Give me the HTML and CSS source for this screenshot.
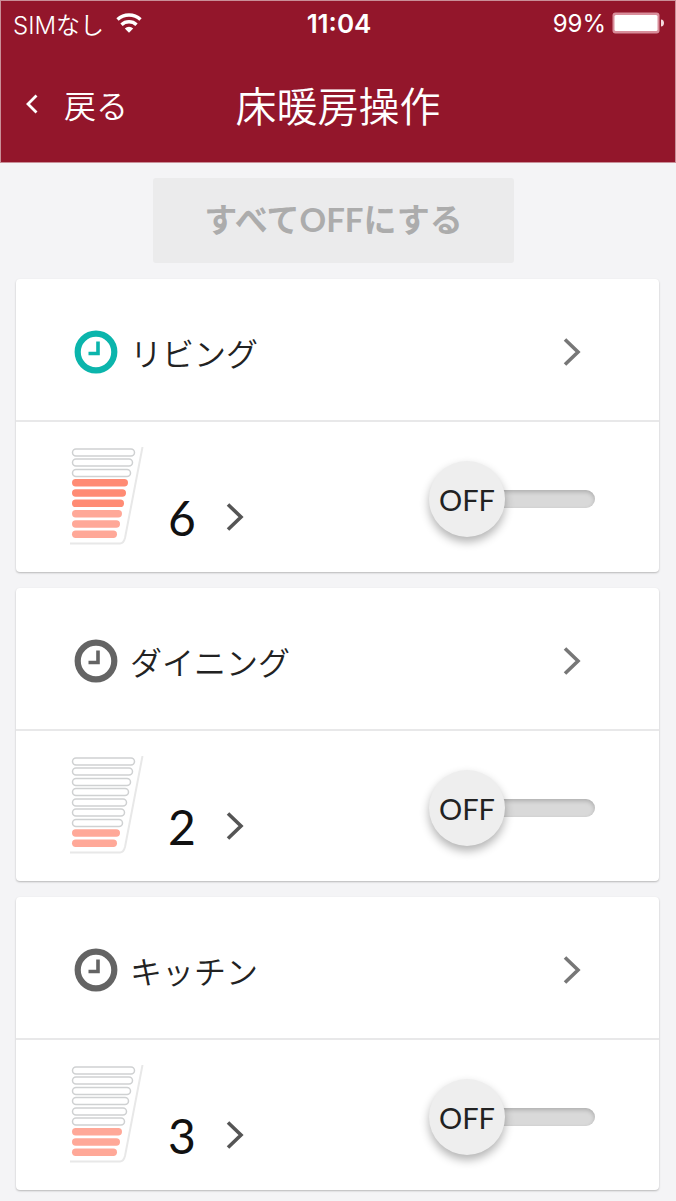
FILE: index.html
```
<!DOCTYPE html>
<html lang="ja">
<head>
    <meta charset="UTF-8">
    <meta name="viewport" content="width=device-width, initial-scale=1.0">
    <title>床暖房操作</title>
    <link rel="stylesheet" href="styles.css">
</head>
<body>
    <header class="header">
        <!-- ステータスバー -->
        <div class="status">
            <div class="carrier">
                <span>SIMなし</span>
                <svg width="26" height="20" viewBox="0 0 26 20" aria-hidden="true">
                    <path d="M1.5 6.5a17 17 0 0 1 23 0" fill="none" stroke="currentColor" stroke-width="3.4"/>
                    <path d="M5.5 11.7a11 11 0 0 1 15 0" fill="none" stroke="currentColor" stroke-width="3.4"/>
                    <path d="M13 19.8l-4.2-4.3a6 6 0 0 1 8.4 0z" fill="currentColor"/>
                </svg>
            </div>
            <span class="time">11:04</span>
            <div class="power">
                <span>99%</span>
                <svg width="53" height="22" viewBox="0 0 53 22" aria-hidden="true">
                    <rect x="0.5" y="0.5" width="47" height="21" rx="3" fill="#d98e9b"/>
                    <rect x="2.5" y="3" width="43" height="16" rx="1.5" fill="#fff"/>
                    <path d="M49 7.5c4 0 4 7 0 7z" fill="#f3d9dd"/>
                </svg>
            </div>
        </div>
        <div class="nav">
            <a class="back" href="#">
                <svg width="12" height="20" viewBox="0 0 12 20" aria-hidden="true">
                    <path d="M10.5 1.5L2 10l8.5 8.5" fill="none" stroke="currentColor" stroke-width="2.8"/>
                </svg>
                戻る
            </a>
            <h1 class="title">床暖房操作</h1>
        </div>
    </header>

    <main class="main">
        <button class="all-off" type="button" disabled>すべてOFFにする</button>

        <!-- リビング -->
        <section class="card">
            <a class="room" href="#">
                <svg class="clock clock-on" width="44" height="44" viewBox="0 0 44 44" aria-hidden="true">
                    <circle cx="22" cy="22" r="18.3" fill="none" stroke="currentColor" stroke-width="6.2"/>
                    <path d="M24 11.5v12H14.500" fill="none" stroke="currentColor" stroke-width="3.6"/>
                </svg>
                <span>リビング</span>
                <svg class="arrow" width="18" height="28" viewBox="0 0 18 28" aria-hidden="true">
                    <path d="M2 1.5L15 14 2 26.5" fill="none" stroke="currentColor" stroke-width="3.6"/>
                </svg>
            </a>
            <div class="control">
                <svg class="gauge" width="74" height="100" viewBox="0 0 74 100" aria-hidden="true">
                    <path class="frame" d="M72.5 0L55 91q-1.5 5.5-5 5.5H0"/>
                    <rect class="empty" x="2.5" y="2" width="62" height="7" rx="3.5"/>
                    <rect class="empty" x="2.5" y="12" width="60" height="7" rx="3.5"/>
                    <rect class="empty" x="2.5" y="22.5" width="58" height="7" rx="3.5"/>
                    <rect class="high" x="2" y="32" width="56" height="7.5" rx="3.7"/>
                    <rect class="high" x="2" y="42.3" width="54" height="7.5" rx="3.7"/>
                    <rect class="high" x="2" y="52.6" width="52" height="7.5" rx="3.7"/>
                    <rect class="low" x="2" y="63" width="50" height="7.5" rx="3.7"/>
                    <rect class="low" x="2" y="73.2" width="48" height="7.5" rx="3.7"/>
                    <rect class="low" x="2" y="83.5" width="45" height="7.5" rx="3.7"/>
                </svg>
                <button class="level" type="button">
                    6
                    <svg width="18" height="28" viewBox="0 0 18 28" aria-hidden="true">
                        <path d="M2 1.5L15 14 2 26.5" fill="none" stroke="currentColor" stroke-width="3.6"/>
                    </svg>
                </button>
                <label class="toggle">
                    <span class="knob">OFF</span>
                    <input class="track" type="checkbox" name="living">
                </label>
            </div>
        </section>

        <!-- ダイニング -->
        <section class="card">
            <a class="room" href="#">
                <svg class="clock" width="44" height="44" viewBox="0 0 44 44" aria-hidden="true">
                    <circle cx="22" cy="22" r="18.3" fill="none" stroke="currentColor" stroke-width="6.2"/>
                    <path d="M24 11.5v12H14.5" fill="none" stroke="currentColor" stroke-width="3.6"/>
                </svg>
                <span>ダイニング</span>
                <svg class="arrow" width="18" height="28" viewBox="0 0 18 28" aria-hidden="true">
                    <path d="M2 1.5L15 14 2 26.5" fill="none" stroke="currentColor" stroke-width="3.6"/>
                </svg>
            </a>
            <div class="control">
                <svg class="gauge" width="74" height="100" viewBox="0 0 74 100" aria-hidden="true">
                    <path class="frame" d="M72.5 0L55 91q-1.5 5.5-5 5.5H0"/>
                    <rect class="empty" x="2.5" y="2" width="62" height="7" rx="3.5"/>
                    <rect class="empty" x="2.5" y="12" width="60" height="7" rx="3.5"/>
                    <rect class="empty" x="2.5" y="22.5" width="58" height="7" rx="3.5"/>
                    <rect class="empty" x="2.5" y="32.5" width="56" height="7" rx="3.5"/>
                    <rect class="empty" x="2.5" y="43" width="54" height="7" rx="3.5"/>
                    <rect class="empty" x="2.5" y="53" width="52" height="7" rx="3.5"/>
                    <rect class="empty" x="2.5" y="63.5" width="50" height="7" rx="3.5"/>
                    <rect class="low" x="2" y="73.2" width="48" height="7.5" rx="3.7"/>
                    <rect class="low" x="2" y="83.5" width="45" height="7.5" rx="3.7"/>
                </svg>
                <button class="level" type="button">
                    2
                    <svg width="18" height="28" viewBox="0 0 18 28" aria-hidden="true">
                        <path d="M2 1.5L15 14 2 26.5" fill="none" stroke="currentColor" stroke-width="3.6"/>
                    </svg>
                </button>
                <label class="toggle">
                    <span class="knob">OFF</span>
                    <input class="track" type="checkbox" name="dining">
                </label>
            </div>
        </section>

        <!-- キッチン -->
        <section class="card">
            <a class="room" href="#">
                <svg class="clock" width="44" height="44" viewBox="0 0 44 44" aria-hidden="true">
                    <circle cx="22" cy="22" r="18.3" fill="none" stroke="currentColor" stroke-width="6.2"/>
                    <path d="M24 11.5v12H14.5" fill="none" stroke="currentColor" stroke-width="3.6"/>
                </svg>
                <span>キッチン</span>
                <svg class="arrow" width="18" height="28" viewBox="0 0 18 28" aria-hidden="true">
                    <path d="M2 1.5L15 14 2 26.5" fill="none" stroke="currentColor" stroke-width="3.6"/>
                </svg>
            </a>
            <div class="control">
                <svg class="gauge" width="74" height="100" viewBox="0 0 74 100" aria-hidden="true">
                    <path class="frame" d="M72.5 0L55 91q-1.5 5.5-5 5.5H0"/>
                    <rect class="empty" x="2.5" y="2" width="62" height="7" rx="3.5"/>
                    <rect class="empty" x="2.5" y="12" width="60" height="7" rx="3.5"/>
                    <rect class="empty" x="2.5" y="22.5" width="58" height="7" rx="3.5"/>
                    <rect class="empty" x="2.5" y="32.5" width="56" height="7" rx="3.5"/>
                    <rect class="empty" x="2.5" y="43" width="54" height="7" rx="3.5"/>
                    <rect class="empty" x="2.5" y="53" width="52" height="7" rx="3.5"/>
                    <rect class="low" x="2" y="63" width="50" height="7.5" rx="3.7"/>
                    <rect class="low" x="2" y="73.2" width="48" height="7.5" rx="3.7"/>
                    <rect class="low" x="2" y="83.5" width="45" height="7.5" rx="3.7"/>
                </svg>
                <button class="level" type="button">
                    3
                    <svg width="18" height="28" viewBox="0 0 18 28" aria-hidden="true">
                        <path d="M2 1.5L15 14 2 26.5" fill="none" stroke="currentColor" stroke-width="3.6"/>
                    </svg>
                </button>
                <label class="toggle">
                    <span class="knob">OFF</span>
                    <input class="track" type="checkbox" name="kitchen">
                </label>
            </div>
        </section>
    </main>
</body>
</html>
```
FILE: styles.css
```
* {
    box-sizing: border-box;
}
body {
    margin: 0;
    font-family: Lato, "Noto Sans CJK JP", sans-serif;
    background-color: #f4f4f6;
    color: #222;
}
.header {
    background-color: #93162b;
    border: 1px solid #c98f98;
    color: #fff;
}
.status {
    display: grid;
    grid-template-columns: 1fr auto 1fr;
    align-items: center;
    height: 44px;
    padding: 0 10px 0 12px;
    font-family: Inter, "Noto Sans CJK JP", sans-serif;
    font-size: 24px;
}
.carrier,
.power {
    display: flex;
    align-items: center;
}
.carrier {
    gap: 12px;
    font-weight: 350;
}
.power {
    justify-content: flex-end;
    gap: 6px;
}
.time {
    font-size: 26px;
    font-weight: 600;
}
.nav {
    display: grid;
    grid-template-columns: 1fr auto 1fr;
    align-items: center;
    height: 117px;
    padding: 0 25px;
    font-family: "Noto Sans CJK JP", sans-serif;
    font-weight: 350;
}
.back {
    display: flex;
    align-items: center;
    gap: 26px;
    color: #fff;
    font-size: 32px;
    text-decoration: none;
}
.title {
    margin: 0;
    font-size: 41px;
    font-weight: 350;
}
.main {
    display: flex;
    flex-direction: column;
    gap: 16px;
    padding: 15px 17px 10px 16px;
}
.all-off {
    height: 85px;
    margin: 0 145px 0 137px;
    padding: 0 0 6px;
    border: none;
    border-radius: 3px;
    background-color: #ebebec;
    color: #acacac;
    font-family: inherit;
    font-size: 33px;
    font-weight: bold;
}
.card {
    background-color: #fff;
    border-radius: 4px;
    box-shadow: 0 1px 2px rgba(0, 0, 0, 0.25);
}
.room {
    display: flex;
    align-items: center;
    gap: 12px;
    height: 143px;
    padding: 4px 78px 0 58px;
    border-bottom: 2px solid #e8e8e9;
    color: #222;
    font-family: "Noto Sans CJK JP", sans-serif;
    font-size: 32px;
    font-weight: 350;
    text-decoration: none;
}
.clock {
    color: #646464;
}
.clock-on {
    color: #0bb5ac;
}
.arrow {
    margin-left: auto;
    color: #777;
}
.control {
    display: flex;
    align-items: center;
    height: 150px;
    padding: 0 64px 0 54px;
}
.frame {
    fill: none;
    stroke: #e8e8e8;
    stroke-width: 2;
}
.empty {
    fill: #fff;
    stroke: #cfd1d2;
    stroke-width: 1.5;
}
.high {
    fill: #ff8b74;
}
.low {
    fill: #ffa898;
}
.level {
    display: flex;
    align-items: center;
    gap: 30px;
    margin: 40px 0 0 24px;
    padding: 0;
    border: none;
    background: none;
    color: #111;
    font-family: inherit;
    font-size: 48px;
}
.level svg {
    color: #555;
}
.toggle {
    display: flex;
    align-items: center;
    margin: 4px 0 0 auto;
    cursor: pointer;
}
.knob {
    z-index: 1;
    display: flex;
    justify-content: center;
    align-items: center;
    width: 76px;
    height: 76px;
    border-radius: 50%;
    background-color: #eee;
    box-shadow: 0 5px 10px rgba(0, 0, 0, 0.3);
    font-size: 29px;
}
.track {
    appearance: none;
    width: 100px;
    height: 18px;
    margin: 0 0 0 -10px;
    border-radius: 9px;
    background-color: #d9d9d9;
    box-shadow: inset 0 2px 4px rgba(0, 0, 0, 0.2);
    cursor: pointer;
}
```
